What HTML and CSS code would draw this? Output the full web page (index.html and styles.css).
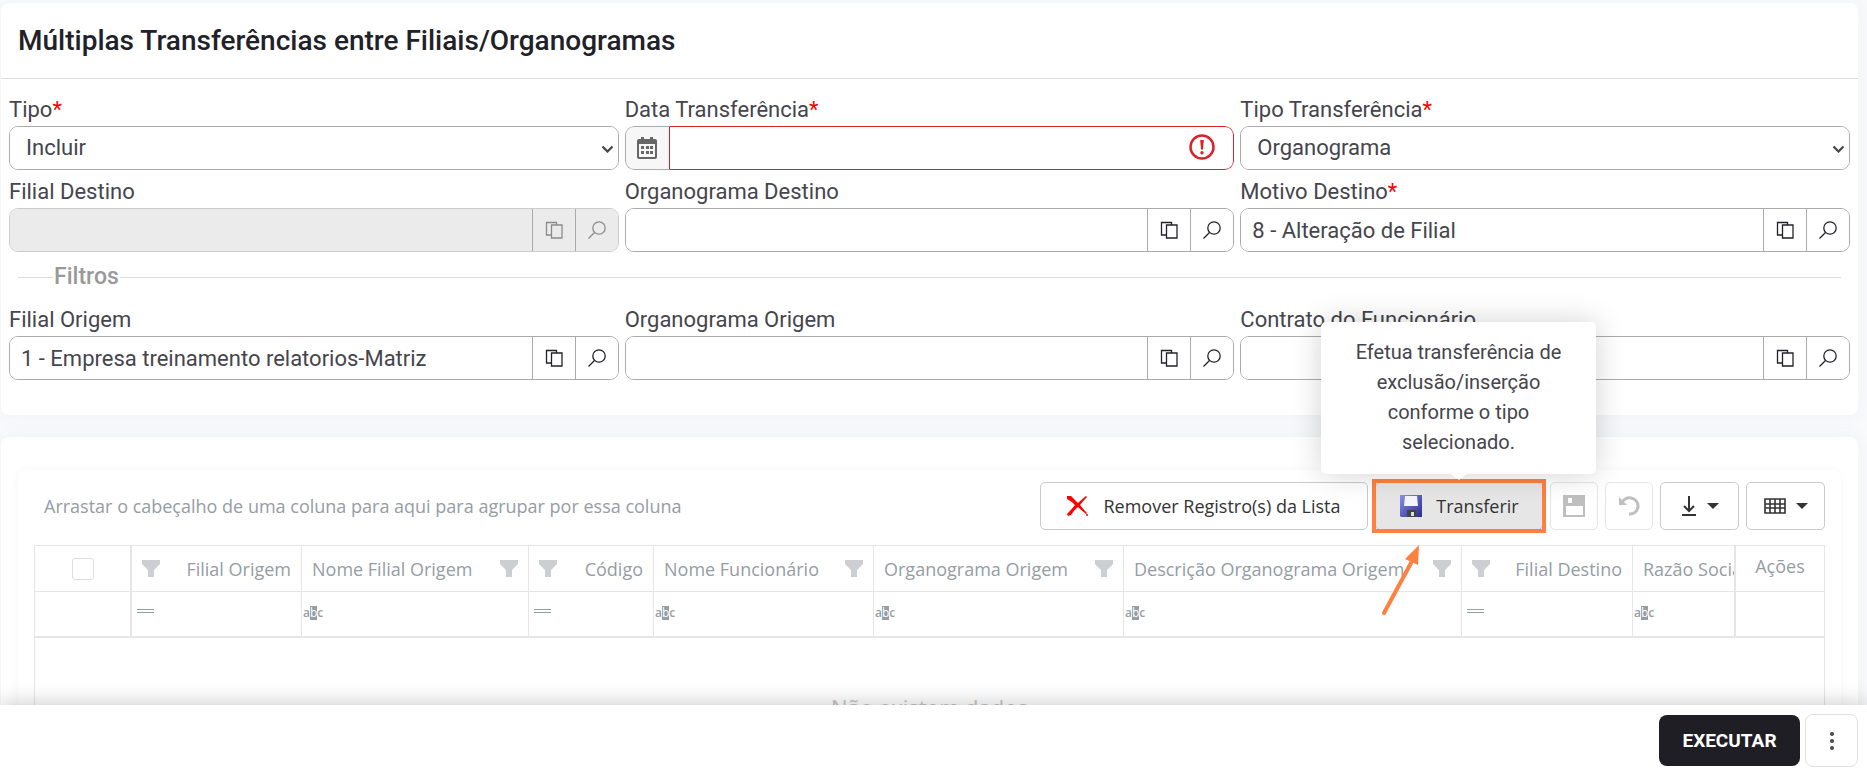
FILE: index.html
```html
<!DOCTYPE html>
<html lang="pt-BR">
<head>
    <meta charset="UTF-8">
    <meta name="viewport" content="width=device-width, initial-scale=1.0">
    <title>Múltiplas Transferências entre Filiais/Organogramas</title>
    <link rel="stylesheet" href="styles.css">
</head>
<body>
    <svg class="sprite" aria-hidden="true">
        <symbol id="copiar" viewBox="0 0 18 18">
            <path d="M6.500 14H1.500V1.500H11.500V4M6.500 4H17V17H6.500Z" fill="none" stroke="currentColor" stroke-width="1.300"/>
        </symbol>
        <symbol id="lupa" viewBox="0 0 18 18">
            <circle cx="11" cy="7" r="6.200" fill="none" stroke="currentColor" stroke-width="1.300"/>
            <path d="M6.500 11.500L0.500 17.500" fill="none" stroke="currentColor" stroke-width="1.300"/>
        </symbol>
        <symbol id="funil" viewBox="0 0 18 17">
            <path d="M0 0H18V4L12 10V17H6V10L0 4Z" fill="currentColor"/>
        </symbol>
        <symbol id="seta" viewBox="0 0 12 6">
            <path d="M0 0H12L6 6Z" fill="currentColor"/>
        </symbol>
        <symbol id="chevron" viewBox="0 0 13 8">
            <path d="M1.500 1.500L6.500 6.500L11.500 1.500" fill="none" stroke="currentColor" stroke-width="2.200"/>
        </symbol>
    </svg>

    <main class="pagina">
        <section class="card">
            <h1>Múltiplas Transferências entre Filiais/Organogramas</h1>
            <form class="formulario">
                <div class="campos">
                    <div class="campo">
                        <label for="tipo">Tipo<span class="obrigatorio">*</span></label>
                        <div class="caixa">
                            <select id="tipo"><option>Incluir</option></select>
                            <svg class="chevron" width="13" height="8"><use href="#chevron"/></svg>
                        </div>
                    </div>
                    <div class="campo">
                        <label for="data">Data Transferência<span class="obrigatorio">*</span></label>
                        <div class="caixa caixa-data">
                            <button type="button" class="calendario" aria-label="Abrir calendário">
                                <svg width="20" height="22" viewBox="0 0 20 22"><path d="M4 0H7V2H13V0H16V2H18Q20 2 20 4V20Q20 22 18 22H2Q0 22 0 20V4Q0 2 2 2H4ZM2 7V20H18V7Z" fill="currentColor" fill-rule="evenodd"/><path d="M4 9H7V12H4ZM9 9H12V12H9ZM13 9H16V12H13ZM4 14H7V17H4ZM9 14H12V17H9ZM13 14H16V17H13Z" fill="currentColor"/></svg>
                            </button>
                            <input type="text" id="data">
                            <svg class="erro" width="26" height="26" viewBox="0 0 26 26"><circle cx="13" cy="13" r="11.500" fill="none" stroke="currentColor" stroke-width="2.500"/><path d="M11.200 6H14.800L14 15.500H12Z" fill="currentColor"/><circle cx="13" cy="18.800" r="1.700" fill="currentColor"/></svg>
                        </div>
                    </div>
                    <div class="campo">
                        <label for="tipoTransferencia">Tipo Transferência<span class="obrigatorio">*</span></label>
                        <div class="caixa">
                            <select id="tipoTransferencia"><option>Organograma</option></select>
                            <svg class="chevron" width="13" height="8"><use href="#chevron"/></svg>
                        </div>
                    </div>
                    <div class="campo">
                        <label for="filialDestino">Filial Destino</label>
                        <div class="caixa desabilitada">
                            <input type="text" id="filialDestino" disabled>
                            <button type="button" disabled aria-label="Copiar"><svg width="18" height="18"><use href="#copiar"/></svg></button>
                            <button type="button" disabled aria-label="Pesquisar"><svg width="18" height="18"><use href="#lupa"/></svg></button>
                        </div>
                    </div>
                    <div class="campo">
                        <label for="organogramaDestino">Organograma Destino</label>
                        <div class="caixa">
                            <input type="text" id="organogramaDestino">
                            <button type="button" aria-label="Copiar"><svg width="18" height="18"><use href="#copiar"/></svg></button>
                            <button type="button" aria-label="Pesquisar"><svg width="18" height="18"><use href="#lupa"/></svg></button>
                        </div>
                    </div>
                    <div class="campo">
                        <label for="motivoDestino">Motivo Destino<span class="obrigatorio">*</span></label>
                        <div class="caixa">
                            <input type="text" id="motivoDestino" value="8 - Alteração de Filial">
                            <button type="button" aria-label="Copiar"><svg width="18" height="18"><use href="#copiar"/></svg></button>
                            <button type="button" aria-label="Pesquisar"><svg width="18" height="18"><use href="#lupa"/></svg></button>
                        </div>
                    </div>
                </div>

                <h2 class="divisor">Filtros</h2>

                <div class="campos">
                    <div class="campo">
                        <label for="filialOrigem">Filial Origem</label>
                        <div class="caixa">
                            <input type="text" id="filialOrigem" value="1 - Empresa treinamento relatorios-Matriz">
                            <button type="button" aria-label="Copiar"><svg width="18" height="18"><use href="#copiar"/></svg></button>
                            <button type="button" aria-label="Pesquisar"><svg width="18" height="18"><use href="#lupa"/></svg></button>
                        </div>
                    </div>
                    <div class="campo">
                        <label for="organogramaOrigem">Organograma Origem</label>
                        <div class="caixa">
                            <input type="text" id="organogramaOrigem">
                            <button type="button" aria-label="Copiar"><svg width="18" height="18"><use href="#copiar"/></svg></button>
                            <button type="button" aria-label="Pesquisar"><svg width="18" height="18"><use href="#lupa"/></svg></button>
                        </div>
                    </div>
                    <div class="campo">
                        <label for="contrato">Contrato do Funcionário</label>
                        <div class="caixa">
                            <input type="text" id="contrato">
                            <button type="button" aria-label="Copiar"><svg width="18" height="18"><use href="#copiar"/></svg></button>
                            <button type="button" aria-label="Pesquisar"><svg width="18" height="18"><use href="#lupa"/></svg></button>
                        </div>
                    </div>
                </div>
            </form>
        </section>

        <section class="card card-grade">
            <div class="grade">
                <div class="barra">
                    <span class="agrupar">Arrastar o cabeçalho de uma coluna para aqui para agrupar por essa coluna</span>
                    <button type="button" class="btn btn-remover">
                        <svg width="22" height="22" viewBox="0 0 22 22"><path d="M0 1H4Q7 4 11 8Q15 4 19 1L20 2Q16 6 13 10Q17 15 20 18L19 19Q14 15 11 12Q7 15 4 20L1 21L0 19Q4 15 8 10Q4 6 0 4Z" fill="#f00"/><circle cx="20" cy="20" r="1" fill="#f00"/></svg>
                        Remover Registro(s) da Lista
                    </button>
                    <div class="destaque">
                        <button type="button" class="btn btn-transferir" aria-describedby="dica">
                            <svg width="24" height="24" viewBox="0 0 24 24"><defs><linearGradient id="azul" x1="0" y1="0" x2="1" y2="1"><stop offset="0" stop-color="#8c90ee"/><stop offset="1" stop-color="#2b2b8c"/></linearGradient></defs><path d="M1 1H23V23H2L1 22Z" fill="url(#azul)"/><path d="M6 2H18L19 12H5Z" fill="#f4f6ff"/><path d="M8 16H17V23H8Z" fill="#444"/><path d="M12 18H15V22H12Z" fill="#ddd"/></svg>
                            Transferir
                        </button>
                        <div class="dica" id="dica" role="tooltip">Efetua transferência de exclusão/inserção conforme o tipo selecionado.</div>
                        <svg class="flecha" width="40" height="72" viewBox="0 0 40 72"><path d="M3 68L30 18" stroke="#ff8040" stroke-width="4" stroke-linecap="round"/><path d="M38 0L37 20L24 14Z" fill="#ff8040"/></svg>
                    </div>
                    <button type="button" class="btn btn-icone" disabled aria-label="Salvar">
                        <svg width="24" height="24" viewBox="0 0 24 24"><path d="M1 1H23V23H1ZM4 12V21H21V12ZM6 4V9H10V4Z" fill="currentColor" fill-rule="evenodd"/></svg>
                    </button>
                    <button type="button" class="btn btn-icone" disabled aria-label="Desfazer">
                        <svg width="22" height="22" viewBox="0 0 22 22"><path d="M4 7Q8 2 13 3A8 8 0 0 1 11 19" fill="none" stroke="currentColor" stroke-width="3"/><path d="M1 2V10H9Z" fill="currentColor"/></svg>
                    </button>
                    <button type="button" class="btn btn-menu" aria-label="Exportar">
                        <svg width="16" height="20" viewBox="0 0 16 20"><path d="M8 0V15M3 10L8 15L13 10M1 19H15" fill="none" stroke="currentColor" stroke-width="2"/></svg>
                        <svg width="12" height="6"><use href="#seta"/></svg>
                    </button>
                    <button type="button" class="btn btn-menu" aria-label="Colunas">
                        <svg width="22" height="16" viewBox="0 0 22 16"><path d="M1 1H21V15H1ZM1 6H21M1 10H21M6 1V15M11 1V15M16 1V15" fill="none" stroke="currentColor" stroke-width="1.600"/></svg>
                        <svg width="12" height="6"><use href="#seta"/></svg>
                    </button>
                </div>

                <table>
                    <colgroup>
                        <col class="c-marcar"><col class="c-filial"><col class="c-nome"><col class="c-codigo"><col class="c-func"><col class="c-org"><col class="c-desc"><col class="c-destino"><col class="c-razao"><col class="c-acoes">
                    </colgroup>
                    <thead>
                        <tr>
                            <th class="fixa"><input type="checkbox" aria-label="Selecionar todos"></th>
                            <th><div class="titulo numero">Filial Origem<svg width="18" height="17"><use href="#funil"/></svg></div></th>
                            <th><div class="titulo">Nome Filial Origem<svg width="18" height="17"><use href="#funil"/></svg></div></th>
                            <th><div class="titulo numero">Código<svg width="18" height="17"><use href="#funil"/></svg></div></th>
                            <th><div class="titulo">Nome Funcionário<svg width="18" height="17"><use href="#funil"/></svg></div></th>
                            <th><div class="titulo">Organograma Origem<svg width="18" height="17"><use href="#funil"/></svg></div></th>
                            <th><div class="titulo">Descrição Organograma Origem<svg width="18" height="17"><use href="#funil"/></svg></div></th>
                            <th><div class="titulo numero">Filial Destino<svg width="18" height="17"><use href="#funil"/></svg></div></th>
                            <th class="fixa"><div class="titulo">Razão Social</div></th>
                            <th class="acoes">Ações</th>
                        </tr>
                        <tr class="filtros">
                            <td class="fixa"></td>
                            <td><span class="igual"></span></td>
                            <td><span class="abc">a<b>b</b>c</span></td>
                            <td><span class="igual"></span></td>
                            <td><span class="abc">a<b>b</b>c</span></td>
                            <td><span class="abc">a<b>b</b>c</span></td>
                            <td><span class="abc">a<b>b</b>c</span></td>
                            <td><span class="igual"></span></td>
                            <td class="fixa"><span class="abc">a<b>b</b>c</span></td>
                            <td></td>
                        </tr>
                    </thead>
                    <tbody>
                        <tr><td colspan="10" class="vazio">Não existem dados</td></tr>
                    </tbody>
                </table>
            </div>
        </section>
    </main>

    <footer class="rodape">
        <button type="button" class="executar">EXECUTAR</button>
        <button type="button" class="mais" aria-label="Mais opções">
            <svg width="4" height="18" viewBox="0 0 4 18"><circle cx="2" cy="2" r="2"/><circle cx="2" cy="9" r="2"/><circle cx="2" cy="16" r="2"/></svg>
        </button>
    </footer>
</body>
</html>
```
FILE: styles.css
```css
* {
    box-sizing: border-box;
}
body {
    margin: 0;
    height: 100vh;
    overflow: hidden;
    display: flex;
    flex-direction: column;
    font-family: Roboto, sans-serif;
    font-size: 22px;
    color: #45454d;
    background-color: #f9fafc;
}
button, input, select {
    font: inherit;
    color: inherit;
}
svg {
    display: block;
    flex: none;
}
.sprite {
    position: absolute;
    width: 0;
    height: 0;
}
.pagina {
    flex: 1;
    min-height: 0;
    display: flex;
    flex-direction: column;
    gap: 22px;
    padding: 3px 9px 0 1px;
    overflow: hidden;
}
.card {
    flex: none;
    background: white;
    border-radius: 8px;
    box-shadow: 0 0 20px rgba(80, 90, 110, 0.06);
}
h1 {
    margin: 0;
    padding: 0 17px;
    font-size: 28px;
    font-weight: 500;
    line-height: 75px;
    color: #212129;
    border-bottom: 1px solid #ddd;
}
.formulario {
    padding: 16px 8px 35px;
}
.campos {
    display: grid;
    grid-template-columns: repeat(3, minmax(0, 1fr));
    gap: 7px 6px;
}
.campo label {
    display: block;
    line-height: 30px;
    padding-bottom: 1px;
}
.obrigatorio {
    color: red;
}
.caixa {
    position: relative;
    display: flex;
    height: 44px;
    border: 1px solid #aaa;
    border-radius: 9px;
    overflow: hidden;
}
.caixa input, .caixa select {
    flex: 1;
    min-width: 0;
    padding: 0 11px;
    border: none;
    outline: none;
    background: white;
}
.caixa select {
    appearance: none;
    padding: 0 16px 2px;
}
.chevron {
    position: absolute;
    right: 4px;
    top: 18px;
    pointer-events: none;
}
.caixa button {
    width: 43px;
    display: flex;
    align-items: center;
    justify-content: center;
    padding: 0;
    border: none;
    border-left: 1px solid #aaa;
    background: white;
    color: #212129;
}
.caixa.desabilitada {
    border-color: #ccc;
}
.desabilitada input, .desabilitada button {
    background: #ebebeb;
    color: #8a8a8a;
}
.caixa-data {
    border: none;
}
.caixa .calendario {
    width: 44px;
    border: 1px solid #aaa;
    border-right: none;
    border-radius: 9px 0 0 9px;
    background: #f7f7f7;
    color: #666;
}
.caixa-data input {
    border: 1px solid #d9232a;
    border-radius: 0 9px 9px 0;
}
.erro {
    position: absolute;
    right: 19px;
    top: 8px;
    color: #d9232a;
}
.divisor {
    display: flex;
    align-items: center;
    gap: 1px;
    margin: 10px 9px 13px;
    font-size: 23px;
    font-weight: 500;
    line-height: 30px;
    color: #999;
}
.divisor::before, .divisor::after {
    content: "";
    flex: 1;
    height: 1px;
    background: #ddd;
}
.divisor::before {
    flex: 0 0 35px;
}
.card-grade {
    padding: 33px 17px 0;
}
.grade {
    padding: 12px 16px 0;
    border-radius: 8px;
    box-shadow: 0 0 8px rgba(0, 0, 0, 0.04);
    font-family: "Open Sans", sans-serif;
    font-size: 18px;
}
.barra {
    display: flex;
    align-items: center;
    gap: 7px;
    margin-bottom: 15px;
}
.agrupar {
    flex: 1;
    padding-left: 10px;
    color: #959da5;
}
.btn {
    display: flex;
    align-items: center;
    justify-content: center;
    height: 48px;
    padding: 0;
    border: 1px solid #c8cccf;
    border-radius: 5px;
    background: white;
    color: #333;
}
.btn:disabled {
    color: #bfbfbf;
    border-color: #e4e6e7;
}
.btn-remover {
    width: 328px;
    gap: 14px;
}
.btn-transferir {
    width: 168px;
    gap: 13px;
    background: #e6e6e6;
}
.btn-icone {
    width: 48px;
}
.btn-menu {
    width: 79px;
    gap: 10px;
}
.destaque {
    position: relative;
    outline: 4px solid #ff8040;
    outline-offset: -1px;
}
.dica {
    position: absolute;
    z-index: 2;
    bottom: 56px;
    left: 50%;
    width: 275px;
    margin-left: -138px;
    padding: 15px 32px 17px;
    border-radius: 5px;
    background: white;
    box-shadow: 0 0 30px rgba(0, 0, 0, 0.18);
    font-family: Roboto, sans-serif;
    font-size: 20px;
    line-height: 30px;
    text-align: center;
}
.dica::after {
    content: "";
    position: absolute;
    top: 100%;
    left: 50%;
    margin-left: -8px;
    border: 8px solid transparent;
    border-top: 6px solid white;
    border-bottom: none;
}
.flecha {
    position: absolute;
    z-index: 2;
    top: 63px;
    left: 6px;
}
table {
    width: 100%;
    table-layout: fixed;
    border-collapse: separate;
    border-spacing: 0;
    border: 1px solid #e6e6e6;
    color: #959da5;
}
.c-marcar { width: 97px; }
.c-filial { width: 170px; }
.c-nome { width: 227px; }
.c-codigo { width: 125px; }
.c-func { width: 220px; }
.c-org { width: 250px; }
.c-desc { width: 338px; }
.c-destino { width: 171px; }
.c-razao { width: 103px; }
.c-acoes { width: 88px; }
th, thead td {
    height: 46px;
    padding: 0;
    font-weight: 400;
    border-right: 1px solid #e6e6e6;
    border-bottom: 1px solid #e6e6e6;
}
th:last-child, thead td:last-child {
    border-right: none;
}
th.fixa, thead td.fixa {
    border-right-width: 2px;
    overflow: hidden;
}
.filtros td {
    border-bottom-width: 2px;
    vertical-align: middle;
}
.titulo {
    display: flex;
    align-items: center;
    justify-content: space-between;
    padding: 0 10px;
    white-space: nowrap;
}
.numero {
    flex-direction: row-reverse;
}
.titulo svg {
    color: #cbcfd2;
}
th.acoes {
    padding-bottom: 6px;
}
th input {
    appearance: none;
    display: block;
    width: 22px;
    height: 22px;
    margin: auto;
    border: 1px solid #ddd;
    border-radius: 3px;
    background: white;
}
.igual {
    display: block;
    width: 17px;
    height: 4px;
    margin: 0 0 6px 5px;
    border: 1px solid #959da5;
    border-width: 1px 0;
}
.abc {
    display: block;
    padding-left: 1px;
    font-size: 12px;
    line-height: 14px;
    font-weight: 600;
    margin-bottom: 3px;
}
.abc b {
    display: inline-block;
    font-weight: 400;
    background: #959da5;
    color: white;
}
.vazio {
    padding: 54px 0 60px;
    text-align: center;
    font-size: 22px;
    line-height: 30px;
    color: #c4c4c4;
}
.rodape {
    position: relative;
    flex: none;
    display: flex;
    align-items: center;
    justify-content: flex-end;
    gap: 5px;
    height: 64px;
    padding: 7px 9px 0 0;
    background: white;
    box-shadow: 0 -2px 20px rgba(0, 0, 0, 0.2);
    z-index: 1;
}
.executar {
    width: 141px;
    height: 51px;
    border: none;
    border-radius: 8px;
    background: #1f1e25;
    color: white;
    font-size: 19px;
    font-weight: 700;
}
.mais {
    display: flex;
    align-items: center;
    justify-content: center;
    width: 53px;
    height: 53px;
    border: 1px solid #e0e0e4;
    border-radius: 8px;
    background: white;
    fill: #45454d;
}
```
